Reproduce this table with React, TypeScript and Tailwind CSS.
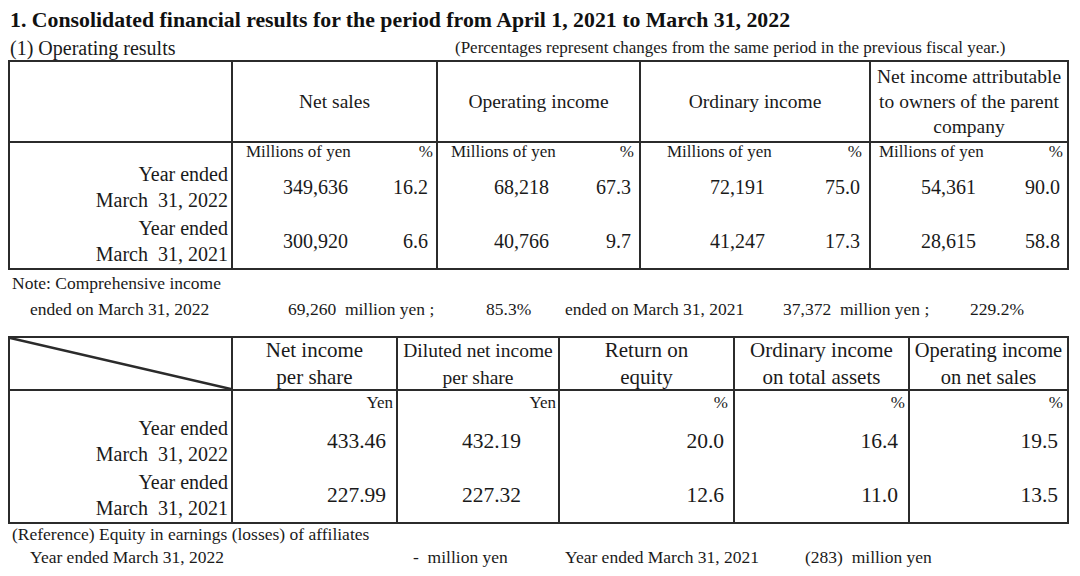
import clsx from "clsx";

const line = "border-[#2b2b2b]";

const resultGroups = [
  { title: ["Net sales"], w: "w-[205px]", s1: "w-[133px]", pl: "pl-[13px]", npr: "pr-[18px]", ppr: "pr-[8px]", hpr: "pr-[3px]" },
  { title: ["Operating income"], w: "w-[203px]", s1: "w-[133px]", pl: "pl-[13px]", npr: "pr-[22px]", ppr: "pr-[8px]", hpr: "pr-[5px]" },
  { title: ["Ordinary income"], w: "w-[230px]", s1: "w-[145px]", pl: "pl-[26px]", npr: "pr-[21px]", ppr: "pr-[9px]", hpr: "pr-[7px]" },
  {
    title: ["Net income attributable", "to owners of the parent", "company"],
    w: "w-[196px]",
    s1: "w-[125px]",
    pl: "pl-[8px]",
    npr: "pr-[20px]",
    ppr: "pr-[7px]",
    hpr: "pr-[4px]",
  },
];

const resultRows = [
  { label: "March\u00a0 31, 2022", vals: ["349,636", "16.2", "68,218", "67.3", "72,191", "75.0", "54,361", "90.0"] },
  { label: "March\u00a0 31, 2021", vals: ["300,920", "6.6", "40,766", "9.7", "41,247", "17.3", "28,615", "58.8"] },
];

const ratioCols = [
  { title: ["Net income", "per share"], w: "w-[165px]", unit: "Yen", upr: "pr-[3px]", vpr: "pr-[10px]", size: "text-[21px]" },
  { title: ["Diluted net income", "per share"], w: "w-[162px]", unit: "Yen", upr: "pr-[2px]", vpr: "pr-[37px]", size: "text-[19.5px]" },
  { title: ["Return on", "equity"], w: "w-[175px]", unit: "%", upr: "pr-[5px]", vpr: "pr-[9px]", size: "text-[21px]" },
  { title: ["Ordinary income", "on total assets"], w: "w-[175px]", unit: "%", upr: "pr-[3px]", vpr: "pr-[10px]", size: "text-[21px]" },
  { title: ["Operating income", "on net sales"], w: "w-[157px]", unit: "%", upr: "pr-[4px]", vpr: "pr-[9px]", size: "text-[20.5px]" },
];

const ratioRows = [
  { label: "March\u00a0 31, 2022", vals: ["433.46", "432.19", "20.0", "16.4", "19.5"] },
  { label: "March\u00a0 31, 2021", vals: ["227.99", "227.32", "12.6", "11.0", "13.5"] },
];

function YearLabel({ date }: { date: string }) {
  return (
    <div className={clsx("flex w-[223px] shrink-0 flex-col items-end justify-center border-r-2 pr-[3px] text-[20px] leading-[26px]", line)}>
      <span>Year ended</span>
      <span className="whitespace-pre">{date}</span>
    </div>
  );
}

function ResultsTable() {
  return (
    <div className={clsx("w-[1061px] border-2", line)}>
      <div className={clsx("flex h-[81px] border-b-2", line)}>
        <div className={clsx("w-[223px] shrink-0 border-r-2", line)} />
        {resultGroups.map((g, i) => (
          <div
            key={i}
            className={clsx(
              "flex shrink-0 flex-col items-center justify-center text-[19.5px] leading-[25px]",
              g.w,
              i < 3 && "border-r-2",
              line,
            )}
          >
            {g.title.map((t) => (
              <span key={t}>{t}</span>
            ))}
          </div>
        ))}
      </div>
      <div className="flex h-[17px] text-[17px] leading-[17px]">
        <div className={clsx("w-[223px] shrink-0 border-r-2", line)} />
        {resultGroups.map((g, i) => (
          <div key={i} className={clsx("flex shrink-0", g.w, i < 3 && "border-r-2", line)}>
            <div className={clsx("shrink-0", g.s1, g.pl)}>Millions of yen</div>
            <div className={clsx("flex-1 text-right", g.hpr)}>%</div>
          </div>
        ))}
      </div>
      {resultRows.map((r) => (
        <div key={r.label} className="flex h-[54px]">
          <YearLabel date={r.label} />
          {resultGroups.map((g, i) => (
            <div key={i} className={clsx("flex shrink-0 text-[20px]", g.w, i < 3 && "border-r-2", line)}>
              <div className={clsx("flex shrink-0 items-center justify-end", g.s1, g.npr)}>{r.vals[i * 2]}</div>
              <div className={clsx("flex flex-1 items-center justify-end", g.ppr)}>{r.vals[i * 2 + 1]}</div>
            </div>
          ))}
        </div>
      ))}
    </div>
  );
}

function RatiosTable() {
  return (
    <div className={clsx("w-[1061px] border-2", line)}>
      <div className={clsx("flex h-[53px] border-b-2", line)}>
        <div className={clsx("relative w-[223px] shrink-0 border-r-2", line)}>
          <svg className="absolute inset-0 h-full w-full" preserveAspectRatio="none" viewBox="0 0 100 100">
            <line x1="0" y1="0" x2="100" y2="100" stroke="#2b2b2b" strokeWidth="2.6" vectorEffect="non-scaling-stroke" />
          </svg>
        </div>
        {ratioCols.map((c, i) => (
          <div
            key={i}
            className={clsx(
              "flex shrink-0 flex-col items-center justify-center leading-[27px]",
              c.w,
              c.size,
              i < 4 && "border-r-2",
              line,
            )}
          >
            {c.title.map((t) => (
              <span key={t}>{t}</span>
            ))}
          </div>
        ))}
      </div>
      <div className="flex h-[23px] text-[17px] leading-[23px]">
        <div className={clsx("w-[223px] shrink-0 border-r-2", line)} />
        {ratioCols.map((c, i) => (
          <div key={i} className={clsx("shrink-0 text-right", c.w, c.upr, i < 4 && "border-r-2", line)}>
            {c.unit}
          </div>
        ))}
      </div>
      {ratioRows.map((r) => (
        <div key={r.label} className="flex h-[54px]">
          <YearLabel date={r.label} />
          {ratioCols.map((c, i) => (
            <div
              key={i}
              className={clsx("flex shrink-0 items-center justify-end text-[21.5px]", c.w, c.vpr, i < 4 && "border-r-2", line)}
            >
              {r.vals[i]}
            </div>
          ))}
        </div>
      ))}
    </div>
  );
}

export default function App() {
  return (
    <div className="h-[576px] w-[1080px] overflow-hidden bg-white px-[8px] pt-[8px] font-['Liberation_Serif',serif] text-[#1a1a1a]">
      <h1 className="pl-[2px] text-[21.8px] font-bold leading-[24px] text-[#111]">
        1. Consolidated financial results for the period from April 1, 2021 to March 31, 2022
      </h1>
      <div className="mt-[3px] flex h-[25px] items-center">
        <span className="w-[447px] shrink-0 pl-[2px] text-[20px]">(1) Operating results</span>
        <span className="text-[17px]">(Percentages represent changes from the same period in the previous fiscal year.)</span>
      </div>
      <ResultsTable />
      <div className="text-[17.5px] leading-[26px]">
        <div className="pl-[4px]">Note: Comprehensive income</div>
        <div className="flex whitespace-pre">
          <span className="w-[280px] shrink-0 pl-[22px]">ended on March 31, 2022</span>
          <span className="w-[198px] shrink-0">69,260  million yen ;</span>
          <span className="w-[79px] shrink-0">85.3%</span>
          <span className="w-[218px] shrink-0">ended on March 31, 2021</span>
          <span className="w-[187px] shrink-0">37,372  million yen ;</span>
          <span>229.2%</span>
        </div>
      </div>
      <div className="mt-[14px]">
        <RatiosTable />
      </div>
      <div className="text-[17.5px]">
        <div className="pl-[4px] leading-[20px]">(Reference) Equity in earnings (losses) of affiliates</div>
        <div className="flex h-[26px] items-center whitespace-pre">
          <span className="w-[405px] shrink-0 pl-[22px]">Year ended March 31, 2022</span>
          <span className="w-[152px] shrink-0">-  million yen</span>
          <span className="w-[240px] shrink-0">Year ended March 31, 2021</span>
          <span>(283)  million yen</span>
        </div>
      </div>
    </div>
  );
}
